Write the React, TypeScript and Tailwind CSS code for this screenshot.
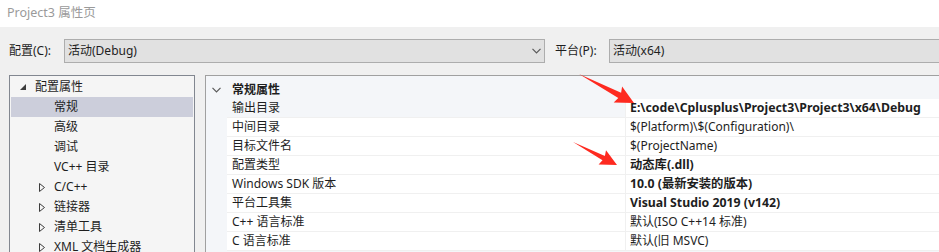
import React from "react";

const font = "font-['Noto_Sans','Noto_Sans_CJK_SC',sans-serif]";

const tree = [
  { label: "配置属性", kind: "root" },
  { label: "常规", kind: "leaf", selected: true },
  { label: "高级", kind: "leaf" },
  { label: "调试", kind: "leaf" },
  { label: "VC++ 目录", kind: "leaf" },
  { label: "C/C++", kind: "group" },
  { label: "链接器", kind: "group" },
  { label: "清单工具", kind: "group" },
  { label: "XML 文档生成器", kind: "group" },
];

const props = [
  { name: "输出目录", value: "E:\\code\\Cplusplus\\Project3\\Project3\\x64\\Debug", bold: true, selected: true },
  { name: "中间目录", value: "$(Platform)\\$(Configuration)\\" },
  { name: "目标文件名", value: "$(ProjectName)" },
  { name: "配置类型", value: "动态库(.dll)", bold: true },
  { name: "Windows SDK 版本", value: "10.0 (最新安装的版本)", bold: true },
  { name: "平台工具集", value: "Visual Studio 2019 (v142)", bold: true },
  { name: "C++ 语言标准", value: "默认(ISO C++14 标准)" },
  { name: "C 语言标准", value: "默认(旧 MSVC)" },
];

function Chevron({ className }: { className?: string }) {
  return (
    <svg width="9" height="6" viewBox="0 0 9 6" className={className}>
      <path d="M0.5 0.8 L4.5 4.8 L8.5 0.8" fill="none" stroke="#5a5a5a" strokeWidth="1.2" />
    </svg>
  );
}

function TreeRow({ item }: { item: (typeof tree)[number] }) {
  return (
    <div className={`flex h-[20px] items-center ${item.selected ? "bg-[#cccedb]" : ""}`}>
      {item.kind === "root" && (
        <>
          <svg width="6" height="6" viewBox="0 0 6 6" className="ml-[9px]">
            <polygon points="6,0 6,6 0,6" fill="#3c3c3c" />
          </svg>
          <span className="ml-[9px]">{item.label}</span>
        </>
      )}
      {item.kind === "group" && (
        <>
          <svg width="6" height="9" viewBox="0 0 6 9" className="ml-[28px]">
            <polygon points="0.5,0.5 5.5,4.5 0.5,8.5" fill="none" stroke="#3c3c3c" strokeWidth="1" />
          </svg>
          <span className="ml-[9px]">{item.label}</span>
        </>
      )}
      {item.kind === "leaf" && <span className="ml-[43px]">{item.label}</span>}
    </div>
  );
}

export default function App() {
  return (
    <div className={`relative h-[252px] w-[939px] overflow-hidden bg-[#f0f0f0] text-[12px] text-[#1e1e1e] ${font}`}>
      <div className="flex h-[27px] items-center bg-white px-[7px] text-[12.5px] text-[#9a9a9a]">Project3 属性页</div>

      <div className="mt-[12px] flex h-[24px] items-center">
        <span className="ml-[9px] w-[55px] shrink-0">配置(C):</span>
        <div className="flex h-[24px] w-[481px] shrink-0 items-center justify-between border border-[#adadad] bg-[#e1e1e1] pl-[3px] pr-[3px]">
          <span>活动(Debug)</span>
          <Chevron />
        </div>
        <span className="ml-[10px] w-[54px] shrink-0">平台(P):</span>
        <div className="flex h-[24px] w-[340px] shrink-0 items-center border border-[#adadad] bg-[#e1e1e1] pl-[3px]">
          <span>活动(x64)</span>
        </div>
      </div>

      <div className="mt-[12px] flex h-[200px] gap-[10px] pl-[9px]">
        <div className="w-[186px] shrink-0 border-l border-t border-r border-[#828790] bg-[#f5f5f5] px-[1px] pt-[1px]">
          {tree.map((t) => (
            <TreeRow key={t.label} item={t} />
          ))}
        </div>

        <div className="flex-1 border-l border-t border-[#a0a0a0] bg-[#f4f6f9]">
          <div className="mt-[4px] flex h-[19px] items-center">
            <div className="flex w-[21px] justify-center">
              <Chevron />
            </div>
            <span className="pl-[5px] font-bold">常规属性</span>
          </div>
          {props.map((p) => (
            <div key={p.name} className="flex h-[19px]">
              <div className="w-[21px] shrink-0" />
              <div
                className={`flex w-[398px] shrink-0 items-center border-b border-[#f0f0f0] pl-[5px] ${
                  p.selected ? "bg-[#f4f6f9]" : "bg-white"
                }`}
              >
                {p.name}
              </div>
              <div
                className={`flex flex-1 items-center whitespace-nowrap border-b border-l border-[#f0f0f0] bg-white pl-[4px] ${
                  p.bold ? "font-bold text-[12.3px]" : ""
                }`}
              >
                {p.value}
              </div>
            </div>
          ))}
        </div>
      </div>

      <svg className="pointer-events-none absolute left-0 top-0" width="939" height="252">
        <polygon
          points="579,74 621.1,92.7 622.1,86.5 634,103 613.7,102.5 618.3,98.1"
          fill="#fe2a20"
        />
        <polygon
          points="573,142 604.9,155.9 606,150.2 617,165 598.6,164.4 602.5,160.3"
          fill="#fe2a20"
        />
      </svg>
    </div>
  );
}
